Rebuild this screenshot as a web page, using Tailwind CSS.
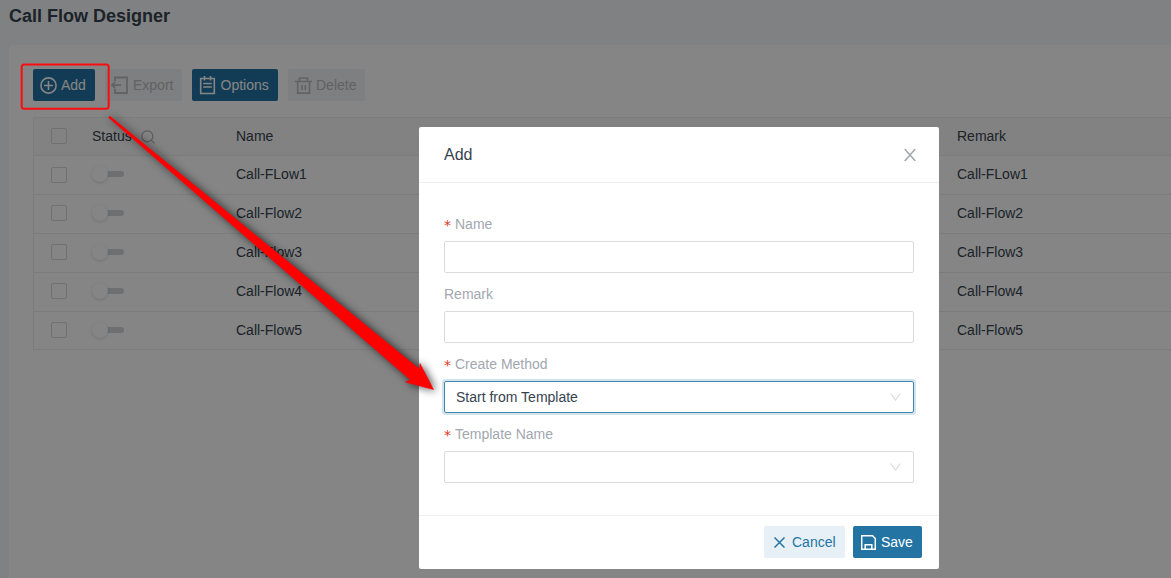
<!DOCTYPE html>
<html lang="en">
<head>
  <meta charset="UTF-8" />
  <title>Call Flow Designer</title>
  <script src="https://cdn.jsdelivr.net/npm/@tailwindcss/browser@4"></script>
  <style>
    body { font-family: 'Liberation Sans', Arial, sans-serif; }
  </style>
</head>
<body class="relative h-screen overflow-hidden bg-[#f5f8fb] text-sm text-[#36434f]">

  <!-- Page -->
  <div class="flex h-screen flex-col pl-[9px]">
    <h1 class="h-[45px] pt-[3px] text-lg leading-[27px] font-bold">Call Flow Designer</h1>

    <main class="flex-1 rounded-tl bg-white pt-6 pl-6">
      <div class="flex h-8 text-sm">
        <button class="flex w-[62px] items-center rounded-[2px] bg-[#2474a3] pl-[7px] text-white">
          <svg class="mr-1 size-[17px]" viewBox="0 0 17 17" fill="none" stroke="currentColor" stroke-width="1.600"><circle cx="8.5" cy="8.5" r="7.600" /><path d="M8.500 4v9M4 8.500h9" /></svg>
          Add
        </button>
        <button class="ml-[10px] flex w-[77px] items-center rounded-[2px] bg-[#f0f4f5] pl-[6px] text-[#b9bcc0]">
          <svg class="mr-1 size-[18px]" viewBox="0 0 18 18" fill="none" stroke="currentColor" stroke-width="1.800"><path d="M4 5V1.500h12v15.500H4V13M1 9.200h9M4 6.200l-3 3 3 3" /></svg>
          Export
        </button>
        <button class="ml-[10px] flex w-[86px] items-center rounded-[2px] bg-[#2474a3] pl-[7px] text-white">
          <svg class="mr-[4.500px] h-[20px] w-[17px]" viewBox="0 0 17 20" fill="none" stroke="currentColor" stroke-width="1.600"><path d="M1.700 3.500h13.600v15H1.700zM5.500 1v4.500M11.500 1v4.500M4.200 8.500h8.600M4.200 12h8.600" /></svg>
          Options
        </button>
        <button class="ml-[10px] flex w-[77px] items-center rounded-[2px] bg-[#f0f4f5] pl-[7px] text-[#b9bcc0]">
          <svg class="mr-1 size-[17px]" viewBox="0 0 17 17" fill="none" stroke="currentColor" stroke-width="1.700"><path d="M0 4.500h17M4.500 4.500V1h8v3.500M2.700 4.500v11.600h11.800V4.500M7 8v5M10.300 8v5" /></svg>
          Delete
        </button>
      </div>

      <div id="table" class="mt-4 border-t border-l border-[#ebeef0]">
        <div class="flex h-[38px] items-center border-b border-[#ebeef0] bg-[#fafafa] pb-[2px]">
          <div class="w-[58px] pl-[17px]"><span class="block size-4 rounded-[2px] border border-[#d6d8da]"></span></div>
          <div class="flex w-[144px] items-center">Status
            <svg class="mt-[2px] ml-[9px] size-[14px] text-[#a9adb0]" viewBox="0 0 14 14" fill="none" stroke="currentColor" stroke-width="1.200"><circle cx="6.300" cy="6.300" r="5.500" /><path d="M10.200 10.200l3.200 3.200" /></svg>
          </div>
          <div class="w-[721px]">Name</div>
          <div>Remark</div>
        </div>
      </div>
    </main>
  </div>

  <template id="row">
    <div class="group flex h-[39px] items-center border-b border-[#ebeef0] last:h-[38px]">
      <div class="w-[58px] pb-[2px] pl-[17px] group-nth-2:pb-0"><span class="block size-4 rounded-[2px] border border-[#d6d8da]"></span></div>
      <div class="isolate flex w-[144px] items-center pb-[2px]">
        <span class="z-1 size-4 rounded-full bg-white shadow-[0_1px_3px_rgba(0,0,0,0.15)]"></span>
        <span class="-ml-1 h-[6px] w-5 rounded-full bg-[#d2d5d8]"></span>
      </div>
      <div class="name w-[721px] pb-[2px]"></div>
      <div class="name pb-[2px]"></div>
    </div>
  </template>

  <!-- Modal -->
  <div class="absolute inset-0 z-10 bg-black/48 pt-[127px] pl-[419px]">
    <div class="h-[442px] w-[520px] rounded-[2px] bg-white">
      <div class="flex h-14 items-center justify-between border-b border-[#eeeff0] pr-[23px] pl-[25px] text-base">
        <span>Add</span>
        <svg class="size-3" viewBox="0 0 12 12" fill="none" stroke="#a5aab0" stroke-width="1.600"><path d="M.7 0l10.600 12M11.300 0L.7 12" /></svg>
      </div>

      <div class="flex h-[332px] flex-col px-[25px] pt-[26px] text-[#a2a7af]">
        <label class="flex h-8 items-center pb-[2px]"><span class="w-[11px] pt-[2px] font-['DejaVu_Sans'] text-[#e0381c]">*</span>Name</label>
        <div class="h-8 rounded-[2px] border border-[#d9dcdf]"></div>
        <label class="mt-[6px] flex h-8 items-center pb-[2px]">Remark</label>
        <div class="h-8 rounded-[2px] border border-[#d9dcdf]"></div>
        <label class="mt-[6px] flex h-8 items-center pb-[2px]"><span class="w-[11px] pt-[2px] font-['DejaVu_Sans'] text-[#e0381c]">*</span>Create Method</label>
        <div class="flex h-8 items-center justify-between rounded-[2px] border border-[#3f89b0] pr-3 pl-[11px] text-[#36434f] shadow-[0_0_0_2px_rgba(36,116,163,0.2)]">
          Start from Template
          <svg class="h-2 w-[11px]" viewBox="0 0 11 8" fill="none" stroke="#d9dadc" stroke-width="1.200"><path d="M.7.500l4.800 6.500L10.300.500" /></svg>
        </div>
        <label class="mt-[6px] flex h-8 items-center pb-[2px]"><span class="w-[11px] pt-[2px] font-['DejaVu_Sans'] text-[#e0381c]">*</span>Template Name</label>
        <div class="flex h-8 items-center justify-end rounded-[2px] border border-[#d9dcdf] pr-3">
          <svg class="h-2 w-[11px]" viewBox="0 0 11 8" fill="none" stroke="#d9dadc" stroke-width="1.200"><path d="M.7.500l4.800 6.500L10.300.500" /></svg>
        </div>
      </div>

      <div class="flex justify-end gap-2 border-t border-[#eeeff0] pt-[10px] pr-[17px]">
        <button class="flex h-8 w-[81px] items-center rounded-[2px] bg-[#e7f0f6] pl-[10px] text-[#2474a3]">
          <svg class="mr-[7px] size-[11px]" viewBox="0 0 11 11" fill="none" stroke="currentColor" stroke-width="1.500"><path d="M.5.500l10 10M10.500.500l-10 10" /></svg>
          Cancel
        </button>
        <button class="flex h-8 w-[69px] items-center rounded-[2px] bg-[#2474a3] pl-2 text-white">
          <svg class="mr-[5px] size-[15px]" viewBox="0 0 15 15" fill="none" stroke="currentColor" stroke-width="1.500"><path d="M.7.700h10.800l2.800 2.800v10.800H.7zM4.200 14V9.700h6.600V14" /></svg>
          Save
        </button>
      </div>
    </div>
  </div>

  <!-- Callout box and arrow -->
  <svg class="absolute inset-0 z-20 h-full w-full drop-shadow-[2px_1px_4px_rgba(0,0,0,0.7)]" viewBox="0 0 1171 578">
    <path d="M108.500 117.500L110 116.200 419.300 369 420 363.500 433.500 389.500 405.300 382 410.500 380z" fill="#f00" stroke="#f00" stroke-width=".6" />
  </svg>
  <svg class="absolute inset-0 z-20 h-full w-full" viewBox="0 0 1171 578">
    <rect x="21.700" y="64.500" width="87" height="44.200" rx="2.500" fill="none" stroke="#fa0d10" stroke-width="2" />
  </svg>

  <script>
    const flows = ["Call-FLow1", "Call-Flow2", "Call-Flow3", "Call-Flow4", "Call-Flow5"];
    const table = document.getElementById("table");
    const row = document.getElementById("row");

    flows.forEach(flow => {
      const el = row.content.cloneNode(true);
      el.querySelectorAll(".name").forEach(cell => cell.textContent = flow);
      table.appendChild(el);
    });
  </script>
</body>
</html>
